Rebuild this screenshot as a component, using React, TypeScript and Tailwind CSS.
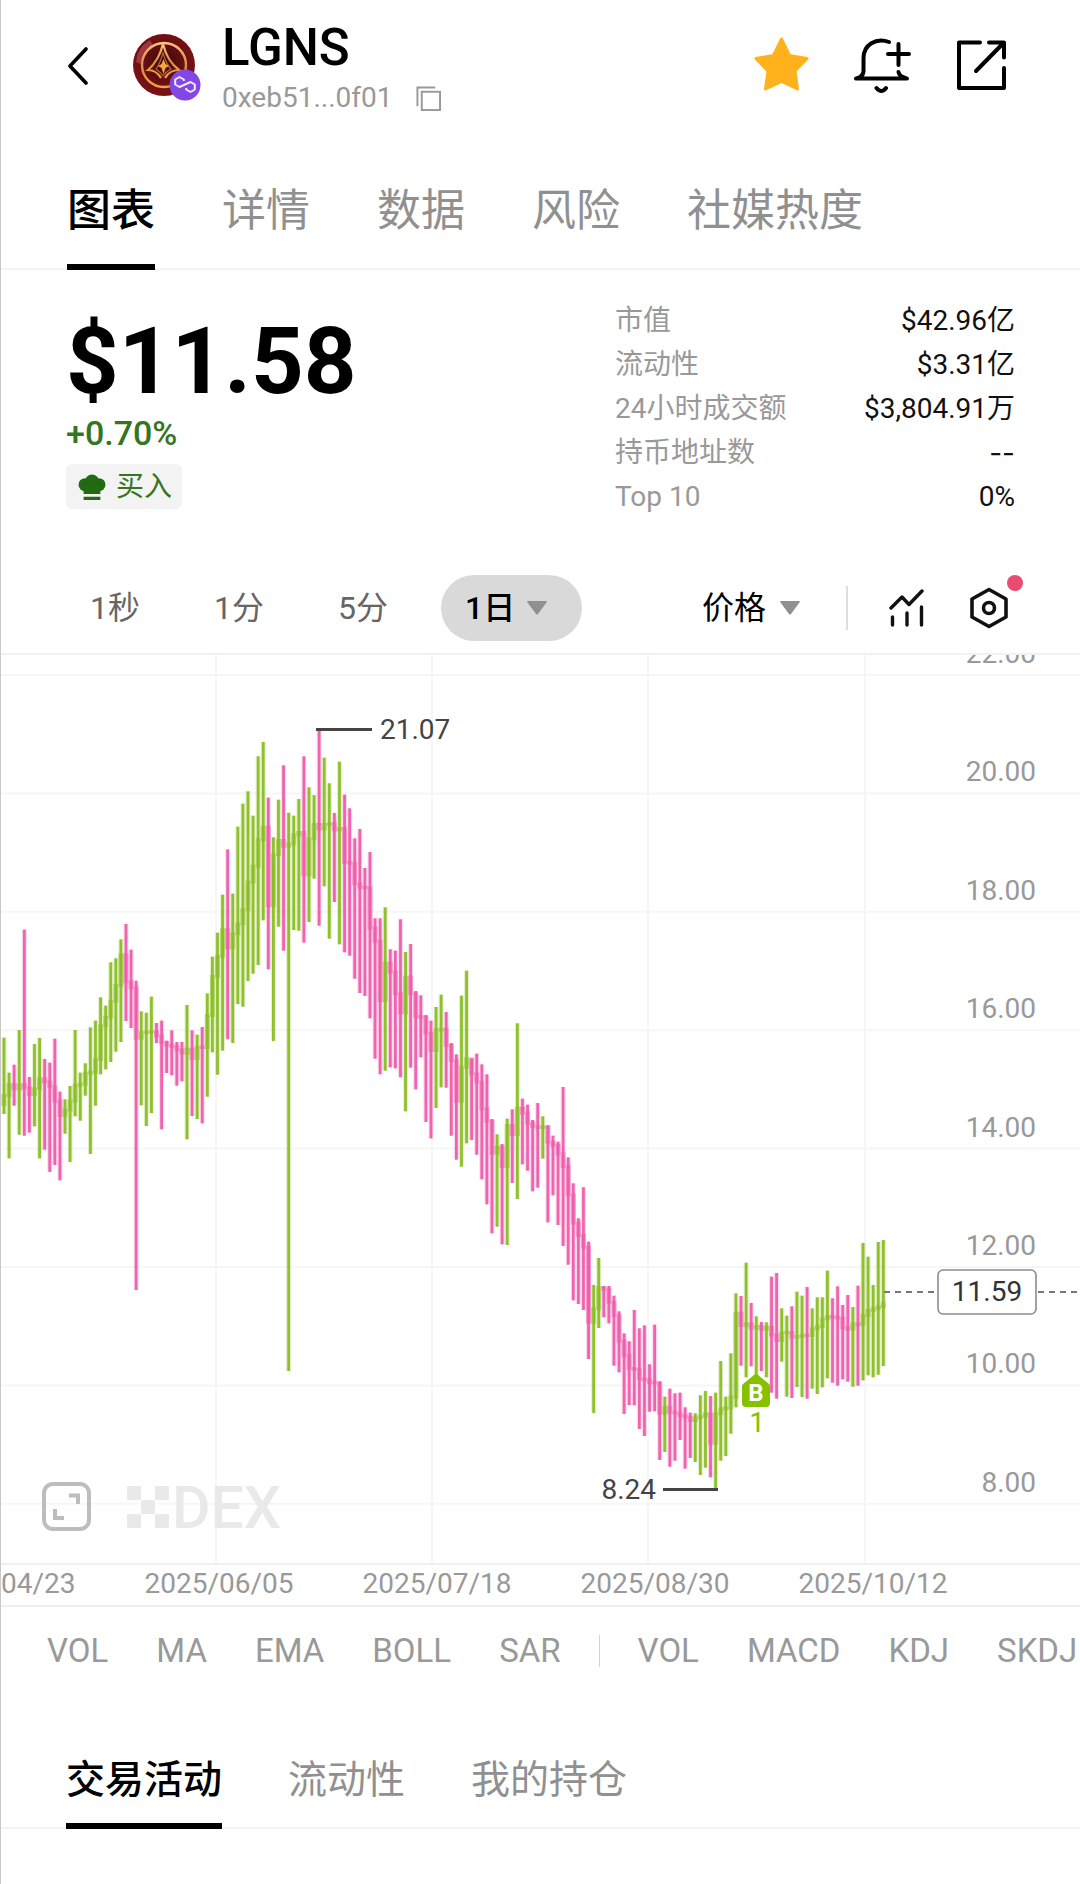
import React from 'react';

type Bar = [dir: 0 | 1, high: number, low: number, close: number];

/* Daily bars, 1 = up, 0 = down. Values are thirds of a plot unit below each block's base. */
const BLOCKS: { base: number; bars: Bar[] }[] = [
  {
    base: 186,
    bars: [
      [1, 593, 822, 765], [1, 698, 955, 732], [0, 674, 797, 745], [1, 570, 884, 733], [0, 269, 887, 742],
      [0, 711, 878, 762], [1, 612, 859, 745], [1, 594, 955, 715], [0, 657, 929, 724], [0, 668, 996, 738],
      [0, 596, 975, 782], [0, 755, 1021, 825], [1, 778, 881, 808], [1, 738, 966, 782], [1, 570, 829, 734],
      [1, 698, 842, 731], [1, 670, 767, 698], [1, 562, 942, 695], [1, 542, 797, 657], [1, 472, 703, 556],
      [1, 497, 688, 530], [1, 367, 666, 482], [1, 355, 635, 435], [1, 298, 606, 343], [0, 252, 543, 424],
      [0, 329, 564, 442], [0, 422, 1350, 593], [1, 514, 796, 576], [1, 518, 858, 575], [1, 470, 819, 574],
      [0, 549, 609, 586], [0, 542, 868, 606], [0, 602, 699, 614], [0, 571, 706, 618], [0, 606, 737, 628],
      [0, 606, 724, 638], [1, 495, 898, 626], [0, 571, 828, 654], [1, 584, 837, 620], [0, 561, 850, 621],
      [1, 460, 770, 525], [1, 350, 637, 408], [1, 278, 704, 348], [1, 164, 632, 268], [0, 28, 598, 322],
      [1, 161, 609, 280],
    ],
  },
  {
    base: 46,
    bars: [
      [1, 380, 912, 670], [1, 311, 920, 627], [1, 274, 843, 545], [1, 347, 821, 497], [1, 169, 795, 418],
      [1, 126, 661, 380], [0, 293, 808, 615], [1, 412, 1023, 463], [1, 299, 680, 420], [0, 196, 752, 437],
      [1, 338, 2013, 430], [1, 347, 690, 403], [1, 297, 692, 396], [0, 169, 728, 523], [1, 262, 666, 415],
      [1, 285, 536, 372], [0, 91, 677, 385], [1, 173, 559, 372], [1, 250, 716, 370], [0, 339, 606, 388],
      [1, 185, 733, 384], [0, 284, 757, 486], [0, 325, 767, 488], [0, 415, 836, 550], [0, 387, 879, 560],
      [0, 504, 888, 562], [0, 456, 955, 682], [0, 655, 1076, 722], [0, 655, 1123, 900], [1, 622, 1112, 788],
      [0, 748, 1102, 815], [0, 752, 1105, 880], [0, 658, 1132, 937], [1, 756, 1234, 830], [0, 732, 1103, 880],
    ],
  },
  {
    base: 86,
    bars: [
      [0, 753, 1048, 828], [0, 766, 952, 830], [0, 825, 1146, 878], [0, 842, 1195, 930], [1, 801, 1104, 868],
      [1, 764, 1042, 866], [0, 816, 1043, 915], [0, 909, 1187, 960], [0, 943, 1259, 1082], [1, 767, 1280, 980],
      [1, 692, 1210, 955], [0, 956, 1200, 1000], [0, 941, 1244, 1025], [0, 973, 1318, 1105], [0, 1003, 1393, 1143],
      [0, 1137, 1480, 1238], [1, 1183, 1460, 1220],
    ],
  },
  {
    base: 346,
    bars: [
      [0, 432, 733, 498], [1, 356, 735, 375], [0, 328, 549, 402], [1, 70, 597, 323], [0, 296, 493, 338],
      [0, 314, 512, 368], [0, 360, 574, 378], [0, 309, 563, 381], [1, 349, 476, 379], [0, 376, 667, 425],
      [0, 407, 586, 435], [0, 425, 675, 460], [0, 261, 738, 498], [0, 472, 794, 583], [0, 550, 901, 668],
      [0, 655, 912, 705], [0, 562, 930, 740], [0, 725, 1077, 965], [1, 855, 1239, 925], [1, 774, 984, 862],
      [0, 858, 952, 866], [0, 858, 970, 905], [0, 887, 1097, 945], [0, 934, 1117, 1022], [0, 1000, 1242, 1065],
      [0, 1024, 1215, 1104], [0, 930, 1216, 1106], [0, 985, 1287, 1135], [0, 976, 1308, 1138], [0, 1093, 1235, 1146],
      [0, 974, 1234, 1148], [0, 1144, 1380, 1238], [1, 1190, 1356, 1220], [0, 1166, 1400, 1235], [0, 1180, 1382, 1238],
      [0, 1178, 1320, 1245], [0, 1222, 1406, 1250], [0, 1238, 1374, 1260], [1, 1240, 1386, 1252], [1, 1186, 1425, 1247],
      [1, 1173, 1403, 1240], [0, 1188, 1432, 1328], [1, 1178, 1465, 1240], [1, 1083, 1382, 1225], [1, 1190, 1368, 1222],
      [1, 1060, 1301, 1190], [1, 880, 1222, 938],
    ],
  },
  {
    base: 546,
    bars: [
      [0, 288, 497, 375], [1, 188, 532, 370], [0, 309, 499, 383], [1, 349, 530, 378], [0, 366, 513, 386],
      [1, 367, 532, 380], [0, 230, 578, 403], [0, 219, 596, 420], [1, 325, 485, 397], [1, 347, 590, 396],
      [0, 319, 594, 410], [1, 275, 561, 408], [1, 287, 591, 404], [0, 261, 596, 405], [1, 325, 566, 385],
      [1, 292, 582, 378], [1, 292, 562, 355], [1, 212, 535, 348], [0, 295, 548, 350], [0, 259, 557, 353],
      [0, 315, 538, 382], [0, 285, 545, 386], [1, 321, 560, 370], [0, 257, 557, 373], [1, 129, 541, 345],
      [1, 170, 526, 330], [1, 255, 532, 325], [1, 126, 524, 318], [1, 120, 498, 308],
    ],
  },
];

const BARS = BLOCKS.flatMap(({ base, bars }) =>
  bars.map(([dir, high, low, close]) => ({
    up: dir === 1,
    high: base + high / 3,
    low: base + low / 3,
    close: base + close / 3,
  })),
);

const barX = (i: number) => 4 + i * 5.083;

const PRICES = ['22.00', '20.00', '18.00', '16.00', '14.00', '12.00', '10.00', '8.00'];
const gridY = (i: number) => 21 + i * 118.4;

function Chart() {
  return (
    <svg viewBox="1 1 1079 908" className="block h-auto w-full" role="img" aria-label="LGNS 1日 K线图">
      <g stroke="#f6f6f6" strokeWidth="2">
        {PRICES.map((p, i) => (
          <line key={p} x1="0" x2="1080" y1={gridY(i)} y2={gridY(i)} />
        ))}
        {[216, 432, 648, 865].map((x) => (
          <line key={x} x1={x} x2={x} y1="0" y2="909" />
        ))}
      </g>

      {/* Watermark */}
      <g fill="#e9e9e9">
        {[[127, 832], [155, 832], [141, 846], [127, 860], [155, 860]].map(([x, y]) => (
          <rect key={`${x}-${y}`} x={x} y={y} width="14" height="14" rx="1" />
        ))}
        <text x="172" y="874" fontSize="59" fontWeight="500">DEX</text>
      </g>

      {BARS.map((b, i) => {
        const open = i === 0 ? b.close + 9 : BARS[i - 1].close;
        const x = barX(i);
        return (
          <g key={i} className={b.up ? 'fill-[#86bb1c] stroke-[#86bb1c]' : 'fill-[#ee57a8] stroke-[#ee57a8]'}>
            <line x1={x} x2={x} y1={b.high} y2={b.low} strokeWidth="5" strokeOpacity="0.22" />
            <rect
              x={x - 2.5}
              y={Math.min(open, b.close) - 1}
              width="5"
              height={Math.abs(open - b.close) + 3}
              stroke="none"
              fillOpacity="0.5"
            />
            <line x1={x} x2={x} y1={b.high} y2={b.low} strokeWidth="2.8" strokeOpacity="0.9" />
          </g>
        );
      })}

      {/* High and low callouts */}
      <g fill="#444" stroke="none" fontSize="28">
        <rect x="316" y="74" width="56" height="3" />
        <text x="380" y="85">21.07</text>
        <rect x="663" y="834" width="55" height="3" />
        <text x="656" y="845" textAnchor="end">8.24</text>
      </g>

      {/* Buy marker */}
      <path
        d="M754 721Q756 719 758 721L769 730Q770 731 770 733V749Q770 753 766 753H746Q742 753 742 749V733Q742 731 743 730Z"
        fill="#86c100"
      />
      <text x="756" y="747" fontSize="24" fontWeight="700" fill="#fff" textAnchor="middle">B</text>
      <text x="757" y="778" fontSize="28" fill="#86c100" textAnchor="middle">1</text>

      {/* Price axis */}
      <g fill="#999" fontSize="28" textAnchor="end">
        {PRICES.map((p, i) => (
          <text key={p} x="1036" y={gridY(i) - 12}>{p}</text>
        ))}
      </g>
      <line x1="884" x2="1080" y1="638" y2="638" stroke="#777" strokeWidth="2" strokeDasharray="6 5" />
      <rect x="938" y="616" width="98" height="44" rx="5" fill="#fff" stroke="#8c8c8c" strokeWidth="1.6" />
      <text x="987" y="647" fontSize="28" fill="#333" textAnchor="middle">11.59</text>

      {/* Full-screen toggle */}
      <g fill="none" stroke="#bdbdbd" strokeWidth="4">
        <rect x="44" y="830" width="45" height="45" rx="9" />
        <path d="M69 841.5H78V850M55 855V864H64" />
      </g>
    </svg>
  );
}

function Caret() {
  return (
    <svg viewBox="0 0 20 14" className="h-[14px] w-5" fill="#909090" aria-hidden="true">
      <path d="M1 0H19Q20.500 0 19.500 1.500L11 13Q10 14 9 13L.5 1.500Q-.5 0 1 0Z" />
    </svg>
  );
}

function TokenLogo() {
  return (
    <div className="relative h-[62px] w-[62px] shrink-0">
      <svg viewBox="0 0 62 62" className="h-full w-full" aria-hidden="true">
        <defs>
          <radialGradient id="coin" cx="0.5" cy="0.45" r="0.55">
            <stop offset="0" stopColor="#3c0808" />
            <stop offset="0.65" stopColor="#6d0f12" />
            <stop offset="1" stopColor="#7c1215" />
          </radialGradient>
          <linearGradient id="gold" x1="0" y1="0" x2="0" y2="1">
            <stop offset="0" stopColor="#f6c27c" />
            <stop offset="0.5" stopColor="#d98e4a" />
            <stop offset="1" stopColor="#f0a040" />
          </linearGradient>
        </defs>
        <circle cx="31" cy="31" r="31" fill="url(#coin)" />
        <path d="M3 28A28 28 0 0 1 17 6L20 11A24 24 0 0 0 8 30Z" fill="#c4585c" opacity="0.55" />
        <circle cx="31" cy="31" r="22" fill="none" stroke="url(#gold)" strokeWidth="2.400" />
        <path
          d="M30 10C27 22 22 30 15 36C21 36 25 39 28 44M30 10C33 22 38 30 46 36C40 36 35 39 32 44"
          fill="none"
          stroke="url(#gold)"
          strokeWidth="2.200"
        />
        <path
          d="M30 19C28 26 26 31 23 35C26 37 28 39 30 42C32 39 34 37 38 35C34 31 32 26 30 19Z"
          fill="none"
          stroke="#b0653a"
          strokeWidth="1.200"
        />
        <path d="M30.500 25L32.500 30L36 32L32.500 34L30.500 40L28.500 34L25 32L28.500 30Z" fill="#f8a53c" />
      </svg>
      <svg viewBox="0 0 32 32" className="absolute -right-[6px] -bottom-[5px] h-8 w-8" aria-hidden="true">
        <circle cx="16" cy="16" r="15.500" fill="#8247e5" />
        <path
          d="M14.800 12V10.500L10.500 8L6.200 10.500V15.500L10.500 18L21.500 13L25.800 15.500V20.500L21.500 23L17.200 20.500V19"
          fill="none"
          stroke="#f3eaff"
          strokeWidth="2"
          strokeLinejoin="round"
        />
      </svg>
    </div>
  );
}

function Header() {
  return (
    <header className="flex items-center pt-4 pr-[73px] pl-[63px]">
      <button type="button" aria-label="返回" className="mr-[41px] shrink-0">
        <svg viewBox="0 0 28 40" className="h-10 w-7" fill="none" stroke="#000" strokeWidth="3.600" strokeLinecap="round">
          <path d="M22 4L6 21L22 38" strokeLinejoin="round" />
        </svg>
      </button>
      <TokenLogo />
      <div className="ml-[27px] pt-[7px]">
        <h1 className="text-[51px] leading-[50px] font-medium">LGNS</h1>
        <div className="mt-[9px] flex h-8 items-center gap-[23px] text-[28px] text-[#999]">
          <span>0xeb51...0f01</span>
          <button type="button" aria-label="复制地址">
            <svg viewBox="0 0 26 26" className="h-[25px] w-[25px]" fill="none" stroke="#999" strokeWidth="2">
              <path d="M1.500 21V1.500H20" />
              <rect x="6" y="6" width="19" height="19" />
            </svg>
          </button>
        </div>
      </div>
      <div className="ml-auto flex items-center gap-11">
        <button type="button" aria-label="收藏">
          <svg viewBox="0 0 56 56" className="h-14 w-14" fill="#ffb21b" stroke="#ffb21b" strokeWidth="3" strokeLinejoin="round">
            <path d="M28.500 2L36.500 18.500L54 21.500L42 34L44.500 52L28.500 44.500L12.500 52L15 34L3 21.500L20.500 18.500Z" />
          </svg>
        </button>
        <button type="button" aria-label="价格提醒">
          <svg viewBox="0 0 58 56" className="h-14 w-[58px]" fill="none" stroke="#000" strokeWidth="4" strokeLinecap="round" strokeLinejoin="round">
            <path d="M36 5C23 0 10.500 8 10.500 21V34Q10.500 38 7 40L3 41.500H54L49 39.500Q46 38 45.500 35M45.500 7V28M35 17H56M23.500 51Q28.500 57 33 51" />
          </svg>
        </button>
        <button type="button" aria-label="分享">
          <svg viewBox="0 0 52 52" className="h-[52px] w-[52px]" fill="none" stroke="#000" strokeWidth="4" strokeLinecap="round" strokeLinejoin="round">
            <path d="M25 3.500H4V49H49V29M34 3.500H49V18.500M49 3.500L21 32" />
          </svg>
        </button>
      </div>
    </header>
  );
}

const TABS = ['图表', '详情', '数据', '风险', '社媒热度'];
const BOTTOM_TABS = ['交易活动', '流动性', '我的持仓'];

const STATS = [
  ['市值', '$42.96亿'],
  ['流动性', '$3.31亿'],
  ['24小时成交额', '$3,804.91万'],
  ['持币地址数', '--'],
  ['Top 10', '0%'],
];

const DATES = ['2025/04/23', '2025/06/05', '2025/07/18', '2025/08/30', '2025/10/12'];
const MAIN_INDICATORS = ['VOL', 'MA', 'EMA', 'BOLL', 'SAR'];
const SUB_INDICATORS = ['VOL', 'MACD', 'KDJ', 'SKDJ'];

export default function App() {
  return (
    <main className="min-h-screen overflow-hidden border-l border-[#c8c8c8] bg-white font-['Roboto','Noto_Sans_CJK_SC',sans-serif] text-black">
      <Header />

      <nav className="mt-[69px] flex gap-[67px] border-b-2 border-[#f4f4f4] pl-[66px] text-[44px] leading-[56px]">
        {TABS.map((t, i) => (
          <button
            key={t}
            type="button"
            className={
              i === 0
                ? '-mb-[2px] border-b-[6px] border-black pb-[25px] font-medium whitespace-nowrap'
                : '-mb-[2px] border-b-[6px] border-transparent pb-[25px] whitespace-nowrap text-[#909090]'
            }
          >
            {t}
          </button>
        ))}
      </nav>

      <section className="flex justify-between pr-[65px] pl-[65px]">
        <div className="pt-[46px]">
          <p className="text-[92px] leading-none font-bold">$11.58</p>
          <p className="mt-[5px] text-[34px] leading-10 font-medium text-[#35751f]">+0.70%</p>
          <span className="mt-[11px] inline-flex h-[45px] items-center gap-[10px] rounded-md bg-[#f3f3f3] pr-[10px] pl-3 text-[28px] text-[#35751f]">
            <svg viewBox="0 0 30 28" className="h-[26px] w-7" fill="#236b12" aria-hidden="true">
              <circle cx="7.5" cy="11.5" r="7" />
              <circle cx="22.5" cy="11.5" r="7" />
              <circle cx="15" cy="8" r="7.5" />
              <path d="M6 10H24V21.500H6ZM6 24.500H24V28H6Z" />
            </svg>
            买入
          </span>
        </div>
        <dl className="w-[400px] pt-[29px] text-[28px] leading-[44px]">
          {STATS.map(([k, v]) => (
            <div key={k} className="flex justify-between whitespace-nowrap">
              <dt className="text-[#999]">{k}</dt>
              <dd className={v === '--' ? "font-['Inter',sans-serif] text-[#111]" : 'text-[#111]'}>{v}</dd>
            </div>
          ))}
        </dl>
      </section>

      <div className="mt-14 flex items-center justify-between border-b-2 border-[#f1f1f1] pr-[71px] pb-3 pl-[89px] text-[32px] text-[#666]">
        <div className="flex items-center gap-[53px]">
          <div className="flex gap-[74px]">
            <button type="button">1秒</button>
            <button type="button">1分</button>
            <button type="button">5分</button>
          </div>
          <button type="button" className="flex h-[66px] w-[141px] items-center gap-3 rounded-full bg-[#d9d9d9] pl-6 font-medium text-black">
            1日
            <Caret />
          </button>
        </div>
        <div className="flex items-center">
          <button type="button" className="flex items-center gap-[14px] text-black">
            价格
            <Caret />
          </button>
          <span className="mr-[41px] ml-[46px] h-11 w-[2px] bg-[#dedede]" />
          <button type="button" aria-label="指标">
            <svg viewBox="0 0 36 38" className="h-[38px] w-9" fill="none" stroke="#111" strokeWidth="3.400" strokeLinecap="round" strokeLinejoin="round">
              <path d="M2 19L13 8L20 15.500L33 2M3.500 28V36M18 24V36M32.500 18V36" />
            </svg>
          </button>
          <button type="button" aria-label="图表设置" className="relative ml-[44px]">
            <svg viewBox="0 0 40 42" className="h-[42px] w-10" fill="none" stroke="#111" strokeWidth="3.600" strokeLinejoin="round">
              <path d="M20 2.500L37 12V30L20 39.500L3 30V12Z" />
              <circle cx="20" cy="21" r="5.500" />
            </svg>
            <span className="absolute -top-[12px] -right-[14px] h-4 w-4 rounded-full bg-[#ea4c6f]" />
          </button>
        </div>
      </div>

      <Chart />

      <div className="flex overflow-hidden border-y-2 border-[#efefef] pb-[2px] text-[28px] leading-[38px] text-[#999]">
        <div className="-ml-[109px] flex">
          {DATES.map((d) => (
            <span key={d} className="w-[218px] shrink-0 text-center">{d}</span>
          ))}
        </div>
      </div>

      <div className="flex items-center gap-[38px] overflow-hidden pt-[22px] pl-[46px] text-[33px] leading-[44px] text-[#999]">
        <div className="flex gap-12">
          {MAIN_INDICATORS.map((n) => (
            <button key={n} type="button">{n}</button>
          ))}
        </div>
        <span className="h-8 w-px shrink-0 bg-[#d4d4d4]" />
        <div className="flex gap-12">
          {SUB_INDICATORS.map((n) => (
            <button key={n} type="button">{n}</button>
          ))}
        </div>
      </div>

      <nav className="mt-[83px] flex gap-[66px] border-b-2 border-[#f4f4f4] pl-[65px] text-[39px] leading-[48px]">
        {BOTTOM_TABS.map((t, i) => (
          <button
            key={t}
            type="button"
            className={
              i === 0
                ? '-mb-[2px] border-b-[6px] border-black pb-[19px] font-medium whitespace-nowrap'
                : '-mb-[2px] border-b-[6px] border-transparent pb-[19px] whitespace-nowrap text-[#909090]'
            }
          >
            {t}
          </button>
        ))}
      </nav>
    </main>
  );
}
